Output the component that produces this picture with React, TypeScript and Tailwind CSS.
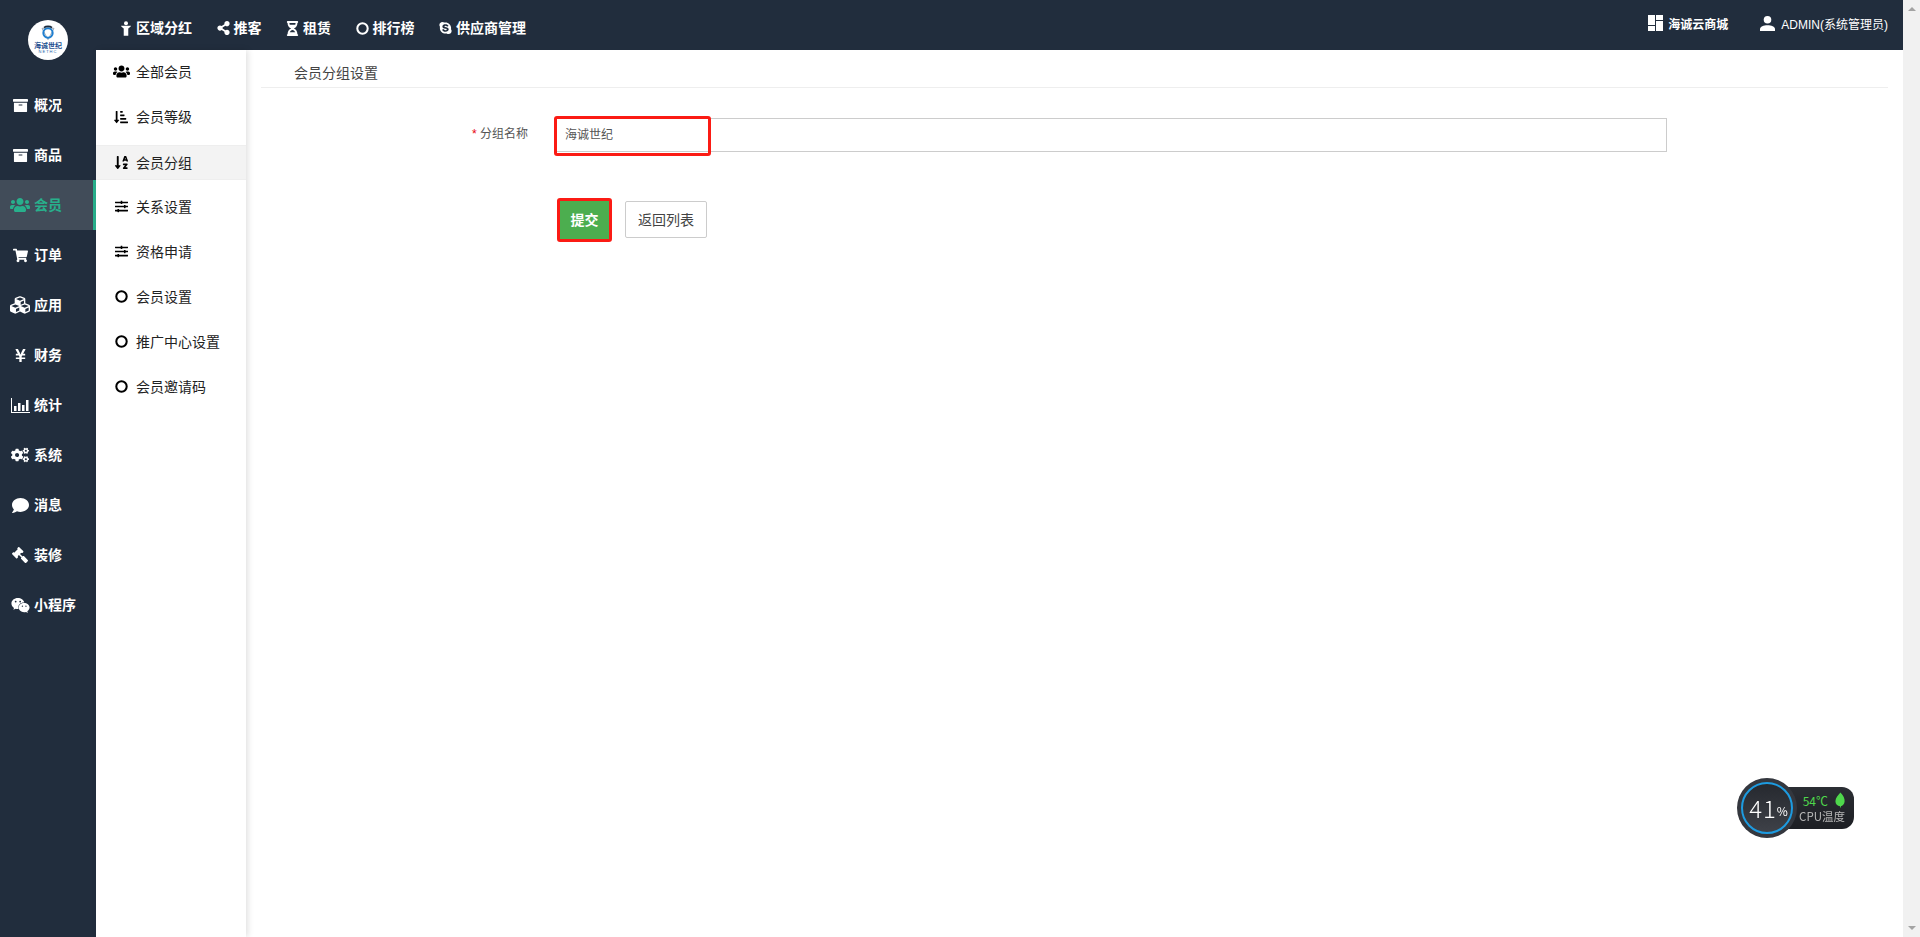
import React from "react";
import {
  FaUsers, FaShoppingCart, FaCubes, FaYenSign, FaCogs, FaComment, FaGavel, FaWeixin,
  FaSortAmountDownAlt, FaSortAlphaDown, FaSlidersH, FaSkype, FaHourglassHalf, FaShareAlt, FaArchive,
} from "react-icons/fa";

const font = "font-['Arial','Liberation_Sans','Noto_Sans_CJK_SC',sans-serif]";

function Ring({ className }: { className?: string }) {
  return (
    <svg viewBox="0 0 14 14" className={className} fill="none" stroke="currentColor" strokeWidth="2.2">
      <circle cx="7" cy="7" r="5.6" />
    </svg>
  );
}

function ChartIcon({ className }: { className?: string }) {
  return (
    <svg viewBox="0 0 19 15" className={className} fill="currentColor">
      <path d="M0 0h1v14h18v1H0z" />
      <path d="M3 8h2.5v5H3zM7 5h2.5v8H7zM11 7h2.5v6H11zM15 2h2.5v11H15z" />
    </svg>
  );
}

function PersonTop({ className }: { className?: string }) {
  return (
    <svg viewBox="0 0 11 16" className={className} fill="currentColor">
      <circle cx="5.5" cy="2.2" r="2.2" />
      <path d="M0 5h11l-.6 1.2L8 8v8H3V8L.6 6.2z" />
    </svg>
  );
}

function UserIcon({ className }: { className?: string }) {
  return (
    <svg viewBox="0 0 15 15" className={className} fill="currentColor">
      <circle cx="7.5" cy="3.8" r="3.8" />
      <path d="M0 15v-2c0-2.4 3.6-3.8 7.5-3.8S15 10.600 15 13v2z" />
    </svg>
  );
}

function Leaf({ className }: { className?: string }) {
  return (
    <svg viewBox="0 0 12 18" className={className} fill="currentColor">
      <path d="M6.500 0C10 3.500 12 7.500 11.500 11c-.4 3-2.400 5-4.500 5.400V18H6v-1.600C3 16 .5 14 .5 10.500.5 6.500 4 3 6.500 0z" />
    </svg>
  );
}

type IconT = React.ComponentType<{ className?: string }>;

const mainNav: [IconT, string, string][] = [
  [FaArchive, "概况", "text-[15px]"],
  [FaArchive, "商品", "text-[15px]"],
  [FaUsers, "会员", "text-[20px]"],
  [FaShoppingCart, "订单", "text-[15px]"],
  [FaCubes, "应用", "text-[20px]"],
  [FaYenSign, "财务", "text-[15px]"],
  [ChartIcon, "统计", "w-[19px] h-[15px]"],
  [FaCogs, "系统", "text-[18px]"],
  [FaComment, "消息", "text-[17px]"],
  [FaGavel, "装修", "text-[16px] -scale-x-100"],
  [FaWeixin, "小程序", "text-[19px]"],
];

const subNav: [IconT, string, string][] = [
  [FaUsers, "全部会员", "text-[17px]"],
  [FaSortAmountDownAlt, "会员等级", "text-[14px]"],
  [FaSortAlphaDown, "会员分组", "text-[15px]"],
  [FaSlidersH, "关系设置", "text-[13px]"],
  [FaSlidersH, "资格申请", "text-[13px]"],
  [Ring, "会员设置", "w-[13px] h-[13px]"],
  [Ring, "推广中心设置", "w-[13px] h-[13px]"],
  [Ring, "会员邀请码", "w-[13px] h-[13px]"],
];

const topNav: [IconT, string, string][] = [
  [PersonTop, "区域分红", "w-[10px] h-[15px]"],
  [FaShareAlt, "推客", "text-[14px]"],
  [FaHourglassHalf, "租赁", "text-[15px]"],
  [Ring, "排行榜", "w-[13px] h-[13px]"],
  [FaSkype, "供应商管理", "text-[14px]"],
];

function Logo() {
  return (
    <div className="w-10 h-10 rounded-full bg-white flex flex-col items-center justify-center overflow-hidden">
      <svg viewBox="0 0 24 24" className="w-[16px] h-[16px] -mt-0.5" fill="none">
        <path d="M3 5 L21 5 L12 22 Z" stroke="#8a97a5" strokeWidth="1.2" />
        <circle cx="12" cy="12" r="7" stroke="#1f7fd0" strokeWidth="3" />
        <path d="M6 4c3-2.500 9-2.500 12 0" stroke="#1b2a3c" strokeWidth="2.500" />
      </svg>
      <span className="text-[7px] leading-[8px] font-bold text-[#1d4f8f] mt-px">海诚世纪</span>
      <span className="text-[4px] leading-[4px] tracking-[1px] text-[#1d5fa8]">NETHC</span>
    </div>
  );
}

export default function App() {
  return (
    <div className={`${font} flex h-[937px] overflow-hidden bg-white`}>
      <div className="flex-1 min-w-0 flex">
        <aside className="w-24 shrink-0 bg-[#212d3d] flex flex-col">
          <div className="h-[80px] pt-5 flex justify-center shrink-0">
            <Logo />
          </div>
          <nav className="flex flex-col">
            {mainNav.map(([Icon, label, size], i) => {
              const active = i === 2;
              return (
                <div
                  key={label}
                  className={`h-[50px] flex items-center text-sm font-bold ${
                    active ? "bg-[#414c59] text-[#28b08c] border-r-[3px] border-[#28b08c]" : "text-white"
                  }`}
                >
                  <span className="w-[34px] flex justify-center pl-[6px] shrink-0">
                    <Icon className={size} />
                  </span>
                  <span>{label}</span>
                </div>
              );
            })}
          </nav>
        </aside>
        <div className="flex-1 min-w-0 flex flex-col">
          <header className="h-[50px] shrink-0 bg-[#212d3d] text-white flex items-center pl-[23px] pr-[15px]">
            <div className="flex items-center gap-[24.5px] text-sm font-bold pt-[6px]">
              {topNav.map(([Icon, label, size]) => (
                <div key={label} className="flex items-center gap-[4px]">
                  <span className="w-[13px] flex justify-center">
                    <Icon className={size} />
                  </span>
                  <span>{label}</span>
                </div>
              ))}
            </div>
            <div className="ml-auto flex items-center gap-[32px] text-xs">
              <div className="flex items-center gap-[5px]">
                <div className="w-[15px] h-4 flex gap-px -mt-1">
                  <div className="flex-1 flex flex-col gap-px">
                    <span className="h-[10px] bg-white" />
                    <span className="flex-1 bg-white" />
                  </div>
                  <div className="flex-1 flex flex-col gap-px">
                    <span className="h-[5px] bg-white" />
                    <span className="flex-1 bg-white" />
                  </div>
                </div>
                <span className="font-bold">海诚云商城</span>
              </div>
              <div className="flex items-center gap-[6px]">
                <UserIcon className="w-[15px] h-[15px] -mt-1" />
                <span>ADMIN(系统管理员)</span>
              </div>
            </div>
          </header>
          <div className="flex-1 min-h-0 flex">
            <div className="w-[150px] shrink-0 bg-white shadow-[2px_0_6px_rgba(0,0,0,0.12)] flex flex-col gap-[10px] pt-[5px]">
              {subNav.map(([Icon, label, size], i) => (
                <div
                  key={label}
                  className={`h-[35px] flex items-center text-sm text-[#222] ${
                    i === 2 ? "bg-[#f3f3f3] border-y border-[#eeeeee]" : "pb-[2px]"
                  }`}
                >
                  <span className="w-[40px] pl-[17px] pr-[7px] shrink-0 flex justify-center">
                    <Icon className={`${size} text-black shrink-0`} />
                  </span>
                  <span>{label}</span>
                </div>
              ))}
            </div>
            <main className="flex-1 min-w-0 px-[15px]">
              <div className="h-[38px] border-b border-[#eeeeee] pl-[33px] flex items-center text-sm text-[#444] pt-[8px]">
                会员分组设置
              </div>
              <div className="flex mt-[30px]">
                <label className="w-[267px] shrink-0 text-xs text-[#555] text-right pt-[8px]">
                  <span className="text-red-600">* </span>分组名称
                </label>
                <div className="ml-[27px] w-[1112px] relative">
                  <input
                    readOnly
                    value="海诚世纪"
                    className="w-full h-[34px] border border-[#cccccc] px-[9px] pb-[3px] text-xs text-[#555] outline-none"
                  />
                  <div className="absolute -left-[1px] -top-[2px] w-[157px] h-[40px] border-[3px] border-[#fb1b14] rounded-[3px] pointer-events-none" />
                </div>
              </div>
              <div className="flex mt-[49px] ml-[298px] items-start gap-[15px]">
                <div className="relative">
                  <button className="w-[51px] h-[38px] bg-[#4cae4f] text-white text-sm font-bold">提交</button>
                  <div className="absolute -left-[2px] -top-[3px] -right-[2px] -bottom-[3px] border-[3px] border-[#fb1b14] rounded-[3px] pointer-events-none" />
                </div>
                <button className="w-[82px] h-[37px] border border-[#cccccc] rounded-[2px] bg-white text-[#444] text-sm">返回列表</button>
              </div>
            </main>
          </div>
        </div>
      </div>
      <div className="w-[17px] shrink-0 bg-[#f1f1f1] flex flex-col items-center justify-between py-[7px]">
        <span className="w-0 h-0 border-x-[4px] border-x-transparent border-b-[4px] border-b-[#a3a3a3]" />
        <span className="w-0 h-0 border-x-[4px] border-x-transparent border-t-[4px] border-t-[#a3a3a3]" />
      </div>
      <div className="fixed left-[1737px] top-[778px] w-[120px] h-[60px] font-['Noto_Sans_CJK_SC',sans-serif]">
        <div className="absolute left-[28px] top-[9px] w-[89px] h-[42px] rounded-r-[12px] bg-gradient-to-b from-[#2b2e34] to-[#1d1f24] flex flex-col items-end pr-[9px] justify-center">
          <div className="flex items-center gap-[7px] text-[12px] leading-[15px] text-[#4fd84c]">
            54℃ <Leaf className="w-[10px] h-[16px] -my-px" />
          </div>
          <div className="text-[11.5px] leading-[16px] text-[#b5b5b5] whitespace-nowrap">CPU温度</div>
        </div>
        <div className="absolute left-0 top-0 w-[60px] h-[60px] rounded-full bg-[#34373e] flex items-center justify-center">
          <div className="w-[52px] h-[52px] rounded-full border-[2px] border-[#1d9be0] bg-gradient-to-b from-[#26292f] to-[#3e4148] flex items-center justify-center text-white pl-[3px]">
            <span className="text-[24px] leading-none font-light tracking-[1px]">41</span>
            <span className="text-[12px] leading-none mt-[6px]">%</span>
          </div>
        </div>
      </div>
    </div>
  );
}
